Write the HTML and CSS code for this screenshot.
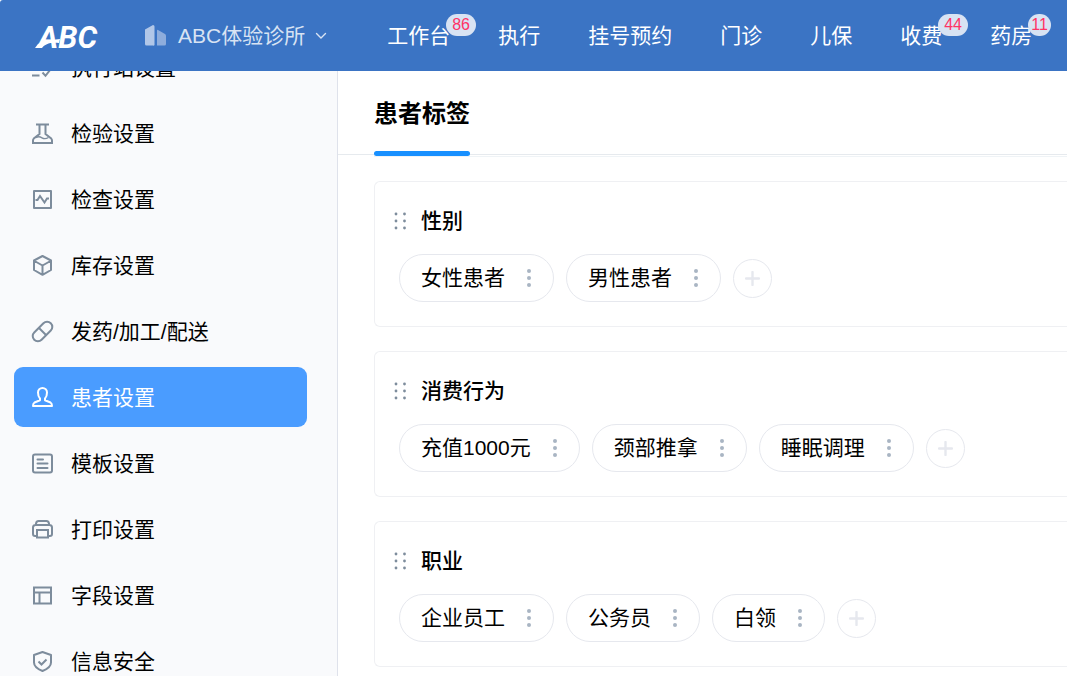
FILE: index.html
```html
<!DOCTYPE html>
<html lang="zh-CN">
<head>
<meta charset="utf-8">
<meta name="viewport" content="width=device-width, initial-scale=1">
<title>患者标签</title>
<link rel="stylesheet" href="styles.css">
</head>
<body>
<svg class="sprite" aria-hidden="true">
  <symbol id="dots" viewBox="0 0 6 20"><circle cx="3" cy="3" r="2"/><circle cx="3" cy="10" r="2"/><circle cx="3" cy="17" r="2"/></symbol>
  <symbol id="grip" viewBox="0 0 13 20"><circle cx="2" cy="3" r="1.4"/><circle cx="2" cy="10" r="1.4"/><circle cx="2" cy="17" r="1.4"/><circle cx="10.500" cy="3" r="1.4"/><circle cx="10.500" cy="10" r="1.4"/><circle cx="10.500" cy="17" r="1.4"/></symbol>
  <symbol id="plus" viewBox="0 0 15 15"><path d="M7.500 1v13M1 7.500h13" fill="none" stroke="currentColor" stroke-width="2.400" stroke-linecap="round"/></symbol>
</svg>

<header class="topbar">
  <a class="logo" href="#" aria-label="ABC">
    <svg width="66" height="30" viewBox="0 0 66 30"><text class="logo-text" x="3" y="27">ABC</text><path d="M0 27 L3 23 C8 21 13 19 25 18 L24 22 C15 21 10 23 7 27Z" fill="#fff"/></svg>
  </a>
  <button class="clinic" type="button">
    <svg width="21" height="21" viewBox="0 0 21 21"><path d="M0 20V4.500L8 0q1.500 0 1.500 1.500V20Q9 21 8 20.500H1.500Q0 20.500 0 19z" fill="#b1c7e8"/><path d="M12 20.500V5.500q0-1 1-.500l7 4q1 .600 1 2v8q0 1.500-1.500 1.500z" fill="#8eaddc"/></svg>
    <span class="clinic-name">ABC体验诊所</span>
    <svg class="chevron" width="12" height="8" viewBox="0 0 12 8"><path d="M1.500 1.500 6 6l4.500-4.500" fill="none" stroke="currentColor" stroke-width="1.400" stroke-linecap="round"/></svg>
  </button>
  <nav class="nav">
    <a class="nav-link" href="#">工作台<span class="badge">86</span></a>
    <a class="nav-link" href="#">执行</a>
    <a class="nav-link" href="#">挂号预约</a>
    <a class="nav-link" href="#">门诊</a>
    <a class="nav-link" href="#">儿保</a>
    <a class="nav-link" href="#">收费<span class="badge">44</span></a>
    <a class="nav-link" href="#">药房<span class="badge badge-slim">11</span></a>
  </nav>
</header>

<div class="workspace">
  <aside class="sidebar">
    <nav class="menu">
      <a class="menu-item" href="#"><svg class="icon" viewBox="0 0 21 21"><path d="M1 2h12M1 10h7M0 18.500h7.500M10.500 15.500l3 3.300 5.500-7"/></svg><span class="menu-label">执行站设置</span></a>
      <a class="menu-item" href="#"><svg class="icon" viewBox="0 0 21 21"><path d="M4 1.500h13M7.500 1.500v9.500L1.800 15.500q-.800 1-.800 2V20h19v-2.500q0-1-.800-2L13.500 11V1.500"/><path d="M4 14.500q3-1.500 6 .300t6.500-.300" stroke-width="1.400"/></svg><span class="menu-label">检验设置</span></a>
      <a class="menu-item" href="#"><svg class="icon" viewBox="0 0 21 21"><path d="M2 2h17v17H2z" stroke-linejoin="round"/><path d="M3.500 11h2L8 7l4.500 6.500 2.500-4h2"/></svg><span class="menu-label">检查设置</span></a>
      <a class="menu-item" href="#"><svg class="icon" viewBox="0 0 21 21"><path d="M10.500 1 19 5.500v9.500l-8.500 4.800L2 15V5.500zM2.500 6l8 4.500 8-4.500M10.500 10.500v9" stroke-linejoin="round"/></svg><span class="menu-label">库存设置</span></a>
      <a class="menu-item" href="#"><svg class="icon" viewBox="0 0 21 21"><rect x="-1.200" y="5.300" width="23.400" height="10.400" rx="5.200" transform="rotate(-45 10.500 10.500)"/><path d="m7 7 7 7"/></svg><span class="menu-label">发药/加工/配送</span></a>
      <a class="menu-item menu-item-active" href="#" aria-current="page"><svg class="icon" viewBox="0 0 21 21"><path d="M8 11.500C6.500 10 6 7.500 6 5.500a4.500 4.500 0 0 1 9 0c0 2-.500 4.500-2 6v1.800l5.500 2.200q1.500 1 1.500 3.500H1q0-2.500 1.500-3.500L8 13.300z" stroke-linejoin="round"/></svg><span class="menu-label">患者设置</span></a>
      <a class="menu-item" href="#"><svg class="icon" viewBox="0 0 21 21"><rect x="1" y="1.500" width="19" height="18" rx="2"/><path d="M5.500 6.500h5.500M5.500 10.500h10M5.500 15h10" stroke-linecap="round"/></svg><span class="menu-label">模板设置</span></a>
      <a class="menu-item" href="#"><svg class="icon" viewBox="0 0 21 21"><path d="M4 6V4.500Q4.500 2 6.500 2h8q2 0 2.500 2.500V6M4.500 17H3q-2 0-2-2V8.500Q1 6 3.500 6h14Q20 6 20 8.500V15q0 2-2 2h-1.500M5 11h11v7.500H5z"/></svg><span class="menu-label">打印设置</span></a>
      <a class="menu-item" href="#"><svg class="icon" viewBox="0 0 21 21"><path d="M2 2.500h17v16H2zM2 7.500h17M7.500 7.500v11"/></svg><span class="menu-label">字段设置</span></a>
      <a class="menu-item" href="#"><svg class="icon" viewBox="0 0 21 21"><path d="m10.500 1 8.500 3v7.500q0 5-8.500 8.500Q2 16.500 2 11.500V4z" stroke-linejoin="round"/><path d="m6.500 10.500 3 3 5-5"/></svg><span class="menu-label">信息安全</span></a>
    </nav>
  </aside>

  <main class="content">
    <div class="tabs">
      <h1 class="tab">患者标签</h1>
    </div>
    <div class="groups">
      <section class="group">
        <h2 class="group-title"><svg class="grip"><use href="#grip"/></svg>性别</h2>
        <div class="tags">
          <span class="tag">女性患者<button class="tag-menu" type="button" aria-label="更多"><svg class="dots"><use href="#dots"/></svg></button></span>
          <span class="tag">男性患者<button class="tag-menu" type="button" aria-label="更多"><svg class="dots"><use href="#dots"/></svg></button></span>
          <button class="add" type="button" aria-label="添加"><svg class="plus"><use href="#plus"/></svg></button>
        </div>
      </section>
      <section class="group">
        <h2 class="group-title"><svg class="grip"><use href="#grip"/></svg>消费行为</h2>
        <div class="tags">
          <span class="tag">充值1000元<button class="tag-menu" type="button" aria-label="更多"><svg class="dots"><use href="#dots"/></svg></button></span>
          <span class="tag">颈部推拿<button class="tag-menu" type="button" aria-label="更多"><svg class="dots"><use href="#dots"/></svg></button></span>
          <span class="tag">睡眠调理<button class="tag-menu" type="button" aria-label="更多"><svg class="dots"><use href="#dots"/></svg></button></span>
          <button class="add" type="button" aria-label="添加"><svg class="plus"><use href="#plus"/></svg></button>
        </div>
      </section>
      <section class="group">
        <h2 class="group-title"><svg class="grip"><use href="#grip"/></svg>职业</h2>
        <div class="tags">
          <span class="tag">企业员工<button class="tag-menu" type="button" aria-label="更多"><svg class="dots"><use href="#dots"/></svg></button></span>
          <span class="tag">公务员<button class="tag-menu" type="button" aria-label="更多"><svg class="dots"><use href="#dots"/></svg></button></span>
          <span class="tag">白领<button class="tag-menu" type="button" aria-label="更多"><svg class="dots"><use href="#dots"/></svg></button></span>
          <button class="add" type="button" aria-label="添加"><svg class="plus"><use href="#plus"/></svg></button>
        </div>
      </section>
    </div>
  </main>
</div>
</body>
</html>
```

FILE: styles.css
```css
* {
  box-sizing: border-box;
}

body {
  margin: 0;
  height: 100vh;
  display: flex;
  flex-direction: column;
  overflow: hidden;
  background: #fff;
  color: #000;
  font-family: "Liberation Sans", "Noto Sans CJK SC", sans-serif;
  font-size: 21px;
  line-height: 30px;
}

a {
  color: inherit;
  text-decoration: none;
}

button {
  margin: 0;
  padding: 0;
  border: 0;
  background: none;
  color: inherit;
  font: inherit;
  cursor: pointer;
}

svg {
  display: block;
  flex: none;
}

.sprite {
  display: none;
}

/* Top bar */
.topbar {
  flex: none;
  display: flex;
  align-items: center;
  height: 71px;
  padding-left: 35px;
  border-top-left-radius: 3px;
  background: #3b74c4;
  color: #fff;
  white-space: nowrap;
}

.logo {
  flex: none;
  margin-right: 44px;
}

.logo-text {
  fill: #fff;
  font-family: Roboto, sans-serif;
  font-size: 31px;
  font-style: italic;
  font-weight: 700;
}

.clinic {
  flex: none;
  display: flex;
  align-items: center;
  gap: 12px;
  margin-right: 60px;
  color: #d8e3f3;
}

.chevron {
  margin-left: -2px;
}

.nav {
  display: flex;
  gap: 48px;
}

.nav-link {
  position: relative;
  flex: none;
}

.badge {
  position: absolute;
  left: calc(100% - 4px);
  top: -7px;
  height: 22px;
  padding: 0 6px;
  border-radius: 11px;
  background: #d8e3f3;
  color: #ff3366;
  font-size: 16px;
  line-height: 22px;
}

.badge-slim {
  padding: 0 3px;
}

/* Layout */
.workspace {
  flex: 1;
  min-height: 0;
  display: flex;
}

.sidebar {
  flex: none;
  width: 338px;
  padding: 0 30px 0 14px;
  overflow: hidden;
  border-right: 1px solid #dfe2eb;
  background: #f9fafc;
}

.menu {
  display: flex;
  flex-direction: column;
  gap: 6px;
  margin-top: -34px;
}

.menu-item {
  display: flex;
  align-items: center;
  gap: 18px;
  height: 60px;
  padding: 0 18px;
  border-radius: 9px;
}

.menu-label {
  padding-top: 2px;
}

.menu-item-active {
  background: #4a9cff;
  color: #fff;
}

.icon {
  width: 21px;
  height: 21px;
  overflow: visible;
  fill: none;
  stroke: #7d8c9c;
  stroke-width: 2;
}

.menu-item-active .icon {
  stroke: #fff;
}

.content {
  flex: 1;
  min-width: 0;
  overflow: hidden;
}

.tabs {
  display: flex;
  height: 84px;
  padding-left: 36px;
  border-bottom: 1px solid #e6eaee;
}

.tab {
  position: relative;
  margin: 0;
  font-size: 24px;
  font-weight: 600;
  line-height: 86px;
}

.tab::after {
  content: "";
  position: absolute;
  left: 0;
  right: 0;
  bottom: -2px;
  height: 5px;
  border-radius: 3px;
  background: #1890ff;
}

/* Tag groups */
.groups {
  display: flex;
  flex-direction: column;
  gap: 24px;
  margin-top: 1px;
  margin-left: 36px;
  padding-top: 24px;
  border-top: 1px solid #eff3f6;
}

.group {
  display: flex;
  flex-direction: column;
  gap: 18px;
  padding: 24px 24px 24px 19px;
  border: 1px solid #eff0f3;
  border-right: 0;
  border-radius: 6px 0 0 6px;
}

.group-title {
  display: flex;
  align-items: center;
  gap: 14px;
  margin: 0;
  font-size: 21px;
  font-weight: 500;
}

.grip {
  width: 13px;
  height: 20px;
  fill: #7d8c9c;
}

.tags {
  display: flex;
  align-items: center;
  gap: 12px;
  padding-left: 5px;
}

.tag {
  display: flex;
  align-items: center;
  gap: 21px;
  height: 48px;
  padding: 0 21px;
  border: 1px solid #e6e8ee;
  border-radius: 24px;
  white-space: nowrap;
}

.dots {
  width: 6px;
  height: 20px;
  fill: #a9b5c3;
}

.add {
  display: flex;
  align-items: center;
  justify-content: center;
  width: 39px;
  height: 39px;
  border: 1px solid #e6e8ee;
  border-radius: 50%;
  color: #e6e8ee;
}

.plus {
  width: 15px;
  height: 15px;
}
```
